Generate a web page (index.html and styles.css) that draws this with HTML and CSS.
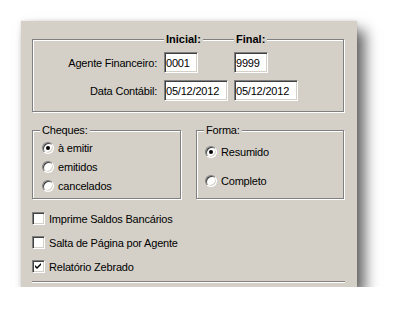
FILE: index.html
```html
<!DOCTYPE html>
<html lang="pt">
<head>
    <meta charset="UTF-8">
    <title>Relatório de Cheques</title>
    <link rel="stylesheet" href="styles.css">
</head>
<body>
    <div class="panel">
        <div class="group group-top">
            <span class="title title-bold title-inicial">Inicial:</span>
            <span class="title title-bold title-final">Final:</span>
            <div class="fields">
                <label class="field-label">Agente Financeiro:</label>
                <div><input type="text" class="edit short" value="0001"></div>
                <div><input type="text" class="edit short" value="9999"></div>
                <label class="field-label">Data Contábil:</label>
                <div><input type="text" class="edit" value="05/12/2012"></div>
                <div><input type="text" class="edit" value="05/12/2012"></div>
            </div>
        </div>

        <div class="options">
            <div class="group group-cheques">
                <span class="title">Cheques:</span>
                <div class="option"><span class="radio checked"></span>à emitir</div>
                <div class="option"><span class="radio"></span>emitidos</div>
                <div class="option"><span class="radio"></span>cancelados</div>
            </div>
            <div class="group group-forma">
                <span class="title">Forma:</span>
                <div class="option"><span class="radio checked"></span>Resumido</div>
                <div class="option"><span class="radio"></span>Completo</div>
            </div>
        </div>

        <div class="checks">
            <div class="option"><span class="checkbox"></span>Imprime Saldos Bancários</div>
            <div class="option"><span class="checkbox"></span>Salta de Página por Agente</div>
            <div class="option">
                <span class="checkbox">
                    <svg width="7" height="7" viewBox="0 0 7 7"><path d="M0 2 L2 4 L6 0 L6 2 L2 6 L0 4 Z" fill="#000"/></svg>
                </span>Relatório Zebrado
            </div>
        </div>

        <div class="separator"></div>
    </div>
</body>
</html>
```

FILE: styles.css
```css
* {
    box-sizing: border-box;
    margin: 0;
    padding: 0;
}
body {
    font-family: 'Liberation Sans', Arial, sans-serif;
    font-size: 11px;
    letter-spacing: -0.2px;
    color: #000;
    background-color: #fff;
}
.panel {
    margin: 21px 0 0 21px;
    width: 336px;
    height: 266px;
    padding: 18px 0 0 11px;
    background-color: #d4d0c8;
    box-shadow: 8px 9px 13px rgba(0,0,0,0.6), 0 0 4px rgba(0,0,0,0.12);
}
.group {
    position: relative;
    border: 1px solid #808080;
    box-shadow: inset 1px 1px 0 #fff, 1px 1px 0 #fff;
}
.title {
    position: absolute;
    top: -7px;
    left: 7px;
    padding: 0 2px;
    line-height: 13px;
    background-color: #d4d0c8;
}
.title-bold {
    font-weight: bold;
    letter-spacing: 0;
}
.title-inicial {
    left: 131px;
}
.title-final {
    left: 201px;
}
.group-top {
    width: 312px;
    height: 73px;
    padding-top: 12px;
}
.fields {
    display: grid;
    grid-template-columns: 125px 64px 64px;
    grid-auto-rows: 21px;
    column-gap: 6px;
    row-gap: 7px;
}
.field-label {
    display: flex;
    align-items: center;
    justify-content: flex-end;
    padding-right: 1px;
}
.edit {
    display: block;
    width: 64px;
    height: 21px;
    padding: 0 1px;
    font-family: 'Liberation Sans', Arial, sans-serif;
    font-size: 11px;
    letter-spacing: -0.2px;
    color: #000;
    background-color: #fff;
    border: 1px solid;
    border-color: #808080 #fff #fff #808080;
    box-shadow: inset 1px 1px 0 #404040, inset -1px -1px 0 #d4d0c8;
    outline: none;
}
.short {
    width: 34px;
}
.options {
    display: grid;
    grid-template-columns: 149px 148px;
    column-gap: 15px;
    margin-top: 18px;
}
.group-cheques,
.group-forma {
    height: 69px;
    padding-left: 9px;
    display: flex;
    flex-direction: column;
}
.group-cheques {
    padding-top: 7px;
}
.group-forma {
    padding-top: 11px;
    padding-left: 8px;
    gap: 10px;
}
.option {
    display: flex;
    align-items: center;
    height: 19px;
}
.radio {
    position: relative;
    width: 12px;
    height: 12px;
    margin-right: 4px;
    border-radius: 50%;
    border: 1px solid;
    border-color: #808080 #fff #fff #808080;
    background-color: #fff;
    box-shadow: inset 1px 1px 0 #404040, inset -1px -1px 0 #d4d0c8;
}
.radio.checked::after {
    content: '';
    position: absolute;
    left: 3px;
    top: 3px;
    width: 4px;
    height: 4px;
    border-radius: 50%;
    background-color: #000;
}
.checks {
    display: flex;
    flex-direction: column;
    gap: 5px;
    margin-top: 10px;
}
.checkbox {
    display: flex;
    align-items: center;
    justify-content: center;
    width: 13px;
    height: 13px;
    margin-right: 4px;
    border: 1px solid;
    border-color: #808080 #fff #fff #808080;
    background-color: #fff;
    box-shadow: inset 1px 1px 0 #404040, inset -1px -1px 0 #d4d0c8;
}
.separator {
    width: 313px;
    margin-top: 5px;
    border-top: 1px solid #808080;
    border-bottom: 1px solid #fff;
}
```
